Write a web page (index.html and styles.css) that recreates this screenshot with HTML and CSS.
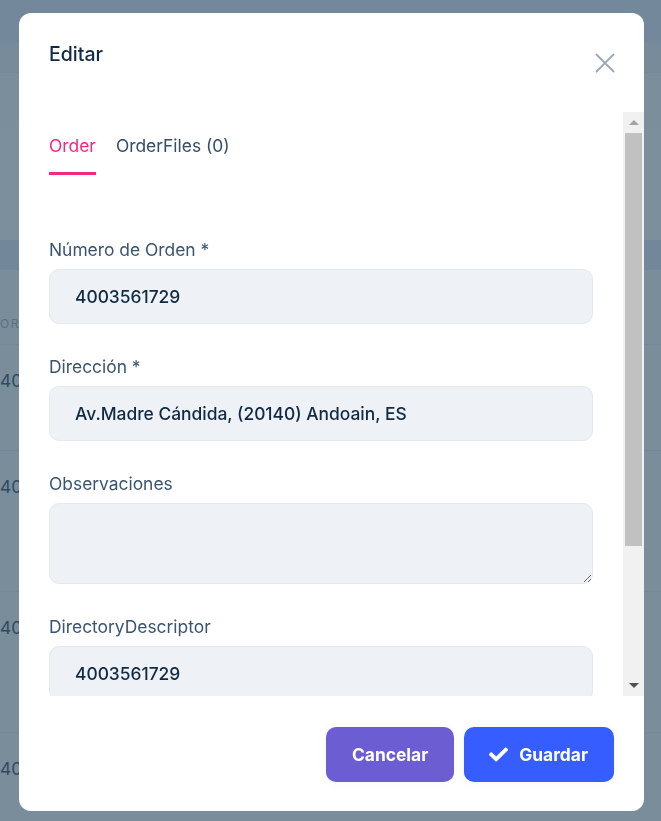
FILE: index.html
```html
<!DOCTYPE html>
<html lang="es">
<head>
<meta charset="utf-8">
<title>Editar</title>
<link rel="stylesheet" href="styles.css">
</head>
<body>
<div class="page">
  <div class="page-top"></div>
  <div class="page-sub"></div>
  <div class="page-toolbar"></div>
  <div class="page-panel"></div>
  <div class="page-thead"></div>
  <div class="page-colhead"><span class="page-cell">ORDEN</span></div>
  <div class="page-row row-a"><span class="page-cell">4003561729</span></div>
  <div class="page-row row-b"><span class="page-cell">4003561730</span></div>
  <div class="page-row row-b"><span class="page-cell">4003561731</span></div>
  <div class="page-row row-c"><span class="page-cell">4003561732</span></div>
</div>

<div class="modal" role="dialog" aria-labelledby="modal-title">
  <header class="modal-header">
    <h2 class="modal-title" id="modal-title">Editar</h2>
    <button class="close-btn" type="button" aria-label="Cerrar">
      <svg width="20" height="20" viewBox="0 0 20 20" aria-hidden="true"><path d="M1.5 1.5 L18.5 18.5 M18.5 1.5 L1.5 18.5" stroke="#9aa9b6" stroke-width="1.8" fill="none" stroke-linecap="round"/></svg>
    </button>
  </header>
  <div class="modal-body">
    <div class="scroll-content">
      <nav class="tabs">
        <span class="tab active">Order</span>
        <span class="tab">OrderFiles (0)</span>
      </nav>
      <form class="form">
        <div class="field">
          <label class="label" for="f-num">Número de Orden *</label>
          <input class="input" id="f-num" type="text" value="4003561729">
        </div>
        <div class="field">
          <label class="label" for="f-dir">Dirección *</label>
          <input class="input" id="f-dir" type="text" value="Av.Madre Cándida, (20140) Andoain, ES">
        </div>
        <div class="field">
          <label class="label" for="f-obs">Observaciones</label>
          <textarea class="input textarea" id="f-obs"></textarea>
        </div>
        <div class="field">
          <label class="label" for="f-desc">DirectoryDescriptor</label>
          <input class="input" id="f-desc" type="text" value="4003561729">
        </div>
      </form>
    </div>
    <div class="scrollbar" aria-hidden="true">
      <div class="sb-btn"><span class="sb-arrow-up"></span></div>
      <div class="sb-track"><div class="sb-thumb"></div></div>
      <div class="sb-btn"><span class="sb-arrow-down"></span></div>
    </div>
  </div>
  <footer class="modal-footer">
    <button class="btn btn-cancel" type="button">Cancelar</button>
    <button class="btn btn-save" type="button">
      <svg class="btn-icon" width="19" height="19" viewBox="0 0 512 512" aria-hidden="true"><path fill="#fff" d="M173.898 439.404l-166.4-166.4c-9.997-9.997-9.997-26.206 0-36.204l36.203-36.204c9.997-9.998 26.207-9.998 36.204 0L192 312.69 432.095 72.596c9.997-9.997 26.207-9.997 36.204 0l36.203 36.204c9.997 9.997 9.997 26.206 0 36.204l-294.4 294.401c-9.998 9.997-26.207 9.997-36.204-.001z"/></svg>
      Guardar
    </button>
  </footer>
</div>
</body>
</html>
```

FILE: styles.css
```css
* { box-sizing: border-box; }

html, body {
  margin: 0;
  height: 100%;
  overflow: hidden;
}

body {
  font-family: Inter, "Noto Sans", sans-serif;
  background: #798d9b;
  color: #102a43;
}

/* dimmed page behind the dialog */
.page { display: flex; flex-direction: column; }
.page-top { height: 42px; background: #73889a; }
.page-sub { height: 30px; background: #778b9a; }
.page-toolbar { height: 55px; background: #7a8e9c; border-top: 1px solid #74899a; }
.page-panel { height: 113px; background: #7b8f9c; }
.page-thead { height: 30px; background: #72889a; }
.page-colhead {
  height: 75px;
  padding: 46px 0 0 0;
  font-size: 12px;
  letter-spacing: 1.5px;
  color: #5b7182;
  border-bottom: 1px solid #71879a;
}
.page-row {
  font-size: 17.4px;
  color: #2f4a62;
  padding: 25px 0 0 0;
  border-bottom: 1px solid #71879a;
}
.page-cell {
  display: block;
  width: 19px;
  overflow: hidden;
  white-space: nowrap;
}
.row-a { height: 106px; }
.row-b { height: 141px; }
.row-c { height: 88px; border-bottom: 0; }

/* dialog */
.modal {
  position: fixed;
  left: 19px;
  top: 13px;
  width: 625px;
  height: 798px;
  background: #fff;
  border-radius: 12px;
  display: flex;
  flex-direction: column;
  overflow: hidden;
}

.modal-header {
  height: 99px;
  flex: none;
  display: flex;
  justify-content: space-between;
  align-items: flex-start;
  padding: 27px 29px 0 30px;
}

.modal-title {
  margin: 0;
  font-size: 19.5px;
  line-height: 28px;
  font-weight: 500;
  color: #102a43;
}

.close-btn {
  margin-top: 13px;
  padding: 0;
  border: 0;
  background: none;
  width: 20px;
  height: 20px;
  display: flex;
}

.modal-body {
  flex: 1;
  min-height: 0;
  display: flex;
}

.scroll-content {
  flex: 1;
  min-width: 0;
  overflow: hidden;
  padding: 22px 30px 0 30px;
}

/* static scrollbar */
.scrollbar {
  flex: none;
  width: 21px;
  background: #f1f1f1;
  display: flex;
  flex-direction: column;
}
.sb-btn {
  height: 21px;
  flex: none;
  display: flex;
  align-items: center;
  justify-content: center;
}
.sb-arrow-up {
  width: 0; height: 0;
  border-left: 5px solid transparent;
  border-right: 5px solid transparent;
  border-bottom: 5px solid #a3a3a3;
}
.sb-arrow-down {
  width: 0; height: 0;
  border-left: 5px solid transparent;
  border-right: 5px solid transparent;
  border-top: 5px solid #505050;
}
.sb-track { flex: 1; padding: 0 2px; }
.sb-thumb { height: 413px; background: #c1c1c1; }

.tabs {
  display: flex;
  gap: 20px;
}

.tab {
  font-size: 17.4px;
  line-height: 24px;
  color: #334e68;
  padding-bottom: 14px;
  border-bottom: 3px solid transparent;
}

.tab.active {
  color: #f5287f;
  border-bottom-color: #f5287f;
}

.form {
  margin-top: 63px;
  display: flex;
  flex-direction: column;
  gap: 31px;
}

.field { display: flex; flex-direction: column; }

.label {
  font-size: 17.4px;
  line-height: 24px;
  color: #3b5570;
  margin-bottom: 7px;
}

.input {
  width: 100%;
  height: 55px;
  border: 1px solid #e4e9ef;
  border-radius: 10px;
  background: #eef2f6;
  padding: 0 25px;
  font-family: inherit;
  font-size: 17.4px;
  font-weight: 500;
  color: #102a43;
  outline: none;
}

.textarea {
  height: 81px;
  padding: 15px 25px;
  resize: vertical;
  display: block;
}

.modal-footer {
  flex: none;
  display: flex;
  justify-content: flex-end;
  gap: 10px;
  padding: 31px 30px 29px;
}

.btn {
  height: 55px;
  border: 0;
  border-radius: 10px;
  padding: 0 26px;
  font-family: inherit;
  font-size: 17.4px;
  font-weight: 700;
  color: #fff;
  display: flex;
  align-items: center;
  gap: 11px;
  box-shadow: 0 0 12px rgba(16, 42, 67, 0.04);
}

.btn-cancel { background: #6c5dd3; }
.btn-save { background: #355dff; padding: 0 26px 0 25px; }
.btn-icon { flex: none; }
```
